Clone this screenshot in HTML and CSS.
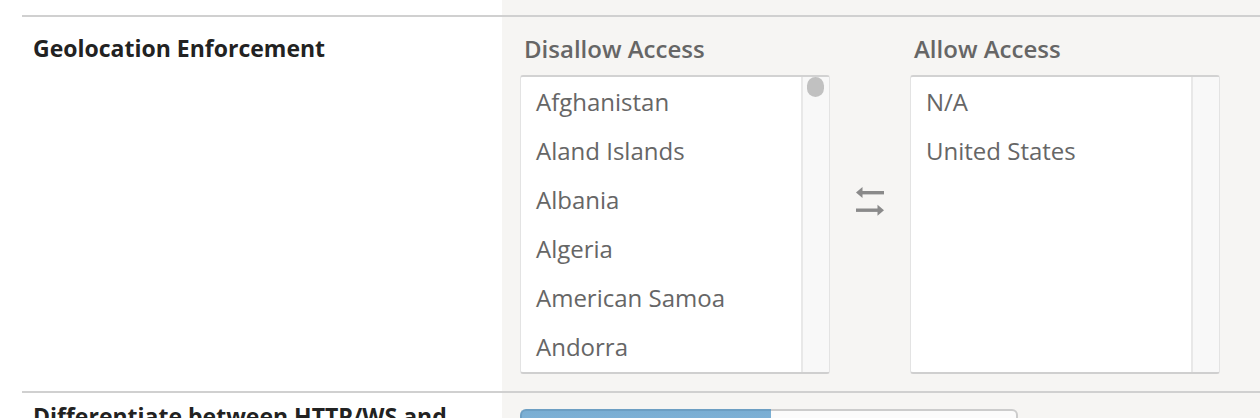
FILE: index.html
```html
<!DOCTYPE html>
<html lang="en">
<head>
<meta charset="utf-8">
<title>Geolocation Enforcement</title>
<link rel="stylesheet" href="styles.css">
</head>
<body>
<div class="page">
  <div class="row row-geo">
    <div class="label">Geolocation Enforcement</div>
    <div class="control">
      <div class="picker">
        <div class="col">
          <div class="col-title">Disallow Access</div>
          <div class="listbox">
            <ul class="items">
              <li>Afghanistan</li>
              <li>Aland Islands</li>
              <li>Albania</li>
              <li>Algeria</li>
              <li>American Samoa</li>
              <li>Andorra</li>
              <li>Angola</li>
            </ul>
            <div class="track"><div class="thumb"></div></div>
          </div>
        </div>
        <div class="swap">
          <svg class="swap-icon" width="28" height="30" viewBox="0 0 28 30" aria-hidden="true">
            <polygon points="0,5.5 6.5,0 6.5,11" />
            <rect x="5" y="4" width="23" height="3.4" />
            <rect x="0" y="21.5" width="23" height="3.4" />
            <polygon points="28,23.2 21.5,17.7 21.5,28.7" />
          </svg>
        </div>
        <div class="col">
          <div class="col-title">Allow Access</div>
          <div class="listbox">
            <ul class="items">
              <li>N/A</li>
              <li>United States</li>
            </ul>
            <div class="track"></div>
          </div>
        </div>
      </div>
    </div>
  </div>
  <div class="row row-proto">
    <div class="label">Differentiate between HTTP/WS and HTTPS/WSS</div>
    <div class="control">
      <div class="seg">
        <button class="seg-btn active">Yes</button>
        <button class="seg-btn">No</button>
      </div>
    </div>
  </div>
</div>
</body>
</html>
```

FILE: styles.css
```css
html, body {
  margin: 0;
  padding: 0;
  overflow: hidden;
}

body {
  font-family: "Open Sans", "Liberation Sans", sans-serif;
  background: #ffffff;
}

.page {
  min-height: 100vh;
  padding-top: 15px;
  background: linear-gradient(90deg, #ffffff 502px, #f6f5f3 502px);
}

.row {
  margin-left: 22px;
  border-top: 2px solid #d0d0d0;
  display: grid;
  grid-template-columns: 480px 1fr;
}

.label {
  padding: 15px 10px 0 11px;
  font-size: 23px;
  line-height: 32px;
  font-weight: 700;
  color: #222222;
}

.control {
  padding-left: 18px;
}

.row-geo .control {
  padding-top: 16px;
  padding-bottom: 17px;
}

.picker {
  display: flex;
  align-items: flex-start;
}

.col {
  width: 310px;
}

.col-title {
  padding-left: 4px;
  font-size: 24px;
  line-height: 32px;
  font-weight: 600;
  color: #666666;
  margin-bottom: 10px;
}

.listbox {
  box-sizing: border-box;
  height: 299px;
  display: flex;
  background: #ffffff;
  border: 1px solid #e3e3e3;
  border-top: 2px solid #d2d2d2;
  border-bottom: 2px solid #cfcfcf;
  border-radius: 3px;
  overflow: hidden;
}

.items {
  flex: 1;
  margin: 0;
  padding: 0;
  list-style: none;
  overflow: hidden;
}

.items li {
  padding-left: 15px;
  font-size: 24px;
  line-height: 49px;
  color: #666666;
  white-space: nowrap;
}

.track {
  box-sizing: border-box;
  width: 28px;
  border-left: 2px solid #e8e8e8;
  background: #f8f8f8;
  padding: 0 5px 0 4px;
}

.thumb {
  width: 17px;
  height: 20px;
  border-radius: 9px;
  background: #c1c1c1;
}

.swap {
  width: 80px;
  display: flex;
  justify-content: center;
  padding-top: 154px;
}

.swap-icon {
  display: block;
  fill: #8a8a8a;
}

.row-proto .label {
  padding-top: 7px;
}

.row-proto .control {
  padding-top: 16px;
}

.seg {
  display: flex;
  width: 498px;
}

.seg-btn {
  flex: 1;
  height: 40px;
  margin: 0;
  font-family: "Open Sans", "Liberation Sans", sans-serif;
  font-size: 20px;
  color: #555555;
  background: #fbfbfb;
  border: 2px solid #cccccc;
  border-left: none;
  border-radius: 0 6px 6px 0;
}

.seg-btn.active {
  flex: 0 0 251px;
  color: #ffffff;
  background: linear-gradient(#7aaed3, #8cbadb);
  border: 2px solid #6d9fc3;
  border-right: none;
  border-radius: 6px 0 0 6px;
}
```
